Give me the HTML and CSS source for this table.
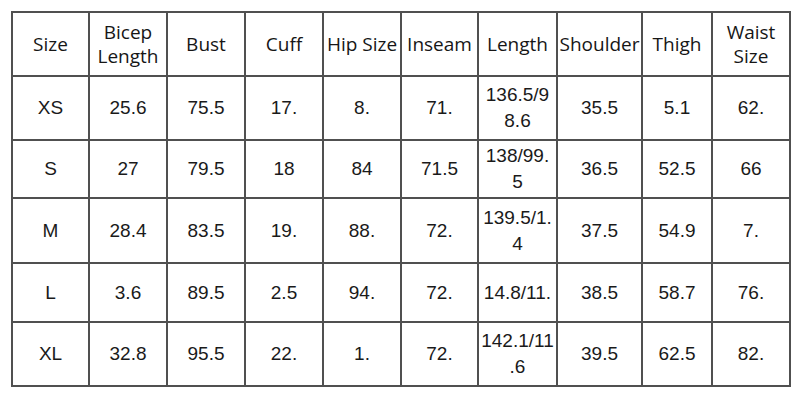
FILE: index.html
```html
<!DOCTYPE html>
<html>
<head>
<meta charset="utf-8">
<link rel="stylesheet" href="styles.css">
</head>
<body>
<div class="chart">
  <div class="cell head">Size</div>
  <div class="cell head">Bicep Length</div>
  <div class="cell head">Bust</div>
  <div class="cell head">Cuff</div>
  <div class="cell head one-line">Hip Size</div>
  <div class="cell head">Inseam</div>
  <div class="cell head">Length</div>
  <div class="cell head one-line">Shoulder</div>
  <div class="cell head">Thigh</div>
  <div class="cell head">Waist Size</div>

  <div class="cell">XS</div>
  <div class="cell">25.6</div>
  <div class="cell">75.5</div>
  <div class="cell">17.</div>
  <div class="cell">8.</div>
  <div class="cell">71.</div>
  <div class="cell one-line">136.5/9<br>8.6</div>
  <div class="cell">35.5</div>
  <div class="cell">5.1</div>
  <div class="cell">62.</div>

  <div class="cell">S</div>
  <div class="cell">27</div>
  <div class="cell">79.5</div>
  <div class="cell">18</div>
  <div class="cell">84</div>
  <div class="cell">71.5</div>
  <div class="cell one-line">138/99.<br>5</div>
  <div class="cell">36.5</div>
  <div class="cell">52.5</div>
  <div class="cell">66</div>

  <div class="cell">M</div>
  <div class="cell">28.4</div>
  <div class="cell">83.5</div>
  <div class="cell">19.</div>
  <div class="cell">88.</div>
  <div class="cell">72.</div>
  <div class="cell one-line">139.5/1.<br>4</div>
  <div class="cell">37.5</div>
  <div class="cell">54.9</div>
  <div class="cell">7.</div>

  <div class="cell">L</div>
  <div class="cell">3.6</div>
  <div class="cell">89.5</div>
  <div class="cell">2.5</div>
  <div class="cell">94.</div>
  <div class="cell">72.</div>
  <div class="cell one-line">14.8/11.</div>
  <div class="cell">38.5</div>
  <div class="cell">58.7</div>
  <div class="cell">76.</div>

  <div class="cell">XL</div>
  <div class="cell">32.8</div>
  <div class="cell">95.5</div>
  <div class="cell">22.</div>
  <div class="cell">1.</div>
  <div class="cell">72.</div>
  <div class="cell one-line">142.1/11<br>.6</div>
  <div class="cell">39.5</div>
  <div class="cell">62.5</div>
  <div class="cell">82.</div>
</div>
</body>
</html>
```
FILE: styles.css
```css
html, body {
  margin: 0;
  padding: 0;
  background: #ffffff;
}

body {
  padding: 11px;
}

.chart {
  display: grid;
  grid-template-columns: 77px 78px 78px 78px 78px 77px 79px 85px 70px 78px;
  grid-template-rows: 64px 64px 58px 65px 59px 64px;
  width: max-content;
  border-left: 2px solid #505050;
  border-top: 2px solid #505050;
}

.cell {
  box-sizing: border-box;
  border-right: 2px solid #505050;
  border-bottom: 2px solid #505050;
  display: flex;
  align-items: center;
  justify-content: center;
  text-align: center;
  padding: 0;
  font-family: "Liberation Sans", Arial, sans-serif;
  font-size: 19px;
  line-height: 26px;
  color: #1a1a1a;
}

.head {
  font-family: "Open Sans", sans-serif;
  font-size: 19px;
  line-height: 24px;
  color: #161616;
}

.one-line {
  white-space: nowrap;
}
```
